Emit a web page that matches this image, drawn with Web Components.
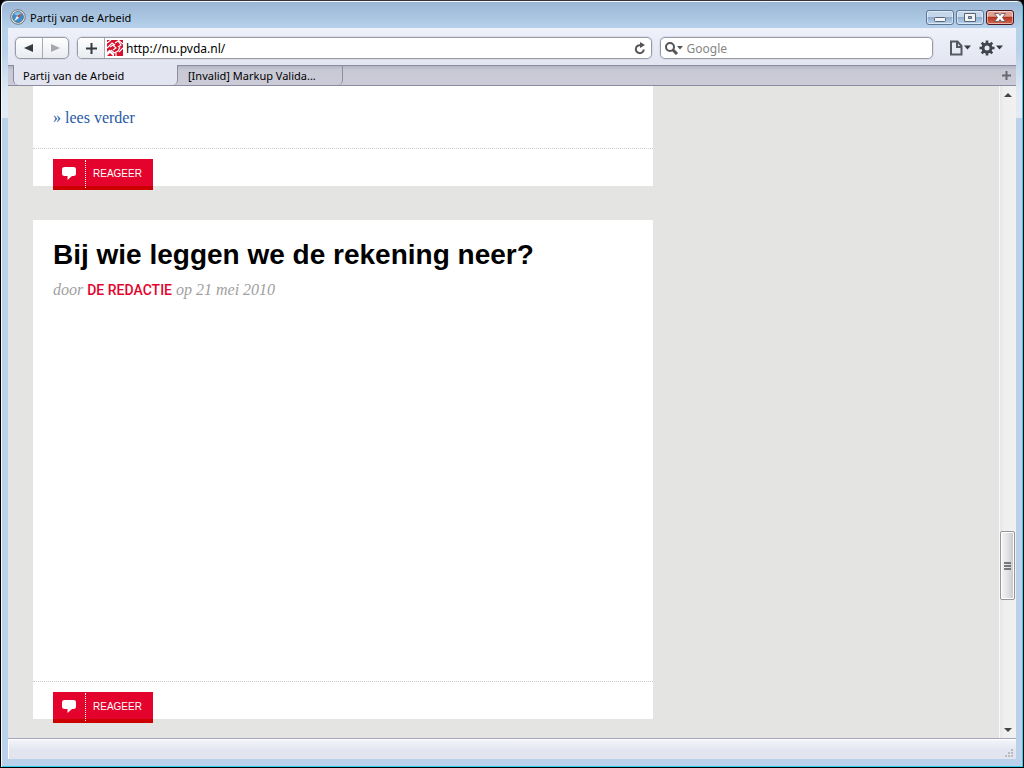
<!DOCTYPE html>
<html lang="nl">
<head>
<meta charset="utf-8">
<title>Partij van de Arbeid</title>
<style>
html, body { margin: 0; height: 100%; background: #000; }
body { font: 11px/16px "Noto Sans", "Open Sans", sans-serif; color: #000; }
</style>
</head>
<body>
<browser-window>
  <title-bar slot="title">Partij van de Arbeid</title-bar>
  <nav-bar slot="chrome"></nav-bar>
  <tab-strip slot="chrome">
    <tab-item active>Partij van de Arbeid</tab-item>
    <tab-item>[Invalid] Markup Valida...</tab-item>
  </tab-strip>
  <web-view slot="view">
    <blog-post>
      <read-more>» lees verder</read-more>
    </blog-post>
    <blog-post>
      <post-heading author="DE REDACTIE" date="21 mei 2010">Bij wie leggen we de rekening neer?</post-heading>
      <media-space></media-space>
    </blog-post>
  </web-view>
  <status-bar slot="status"></status-bar>
</browser-window>

<script>
function define(name, markup, setup) {
  const template = document.createElement('template');
  template.innerHTML = markup;
  customElements.define(name, class extends HTMLElement {
    constructor() {
      super();
      this.attachShadow({ mode: 'open' }).append(template.content.cloneNode(true));
    }
    connectedCallback() { if (setup) setup(this, this.shadowRoot); }
  });
}

define('browser-window', `
<style>
:host { display: flex; flex-direction: column; height: 100vh; box-sizing: border-box;
  border: 1px solid #000; border-top-color: #33333b; border-radius: 7px 7px 0 0; overflow: hidden;
  box-shadow: inset 1px 1px #f3f8fd, inset -1px -1px #2bd0ee;
  padding: 1px;
  background: linear-gradient(#9ab5d4 0, #b6d1ea 27px, #b9d1ea 50px, #dfe9f5 90px, #e2ebf5 117px, #b9d1ea 117px); }
.inner { display: flex; flex-direction: column; flex: 1; min-height: 0; margin: 0 6px 7px; }
.view { flex: 1; min-height: 0; display: flex; }
</style>
<slot name="title"></slot>
<div class="inner">
  <slot name="chrome"></slot>
  <div class="view"><slot name="view"></slot></div>
  <slot name="status"></slot>
</div>`);

define('title-bar', `
<style>
:host { display: flex; align-items: center; height: 26px; padding: 0 8px; }
.logo { width: 16px; height: 16px; margin: 4px 4px 0 0; }
.name { flex: 1; padding-top: 5px; }
.buttons { display: flex; gap: 2px; padding-top: 5px; }
button { width: 28px; height: 15px; padding: 0; box-sizing: border-box; border: 1px solid #5f7595; border-radius: 3px;
  box-shadow: inset 0 0 0 1px #ffffff80; display: flex; align-items: center; justify-content: center;
  background: linear-gradient(#c3d6ea 0 45%, #91aecd 50%, #b8d3ec); }
button.close { border-color: #4a1420; background: linear-gradient(#e0a090 0 40%, #b83521 50%, #d4694f); }
svg { flex: none; }
</style>
<svg class="logo" viewBox="0 0 16 16"><circle cx="8" cy="8" r="7.3" fill="#dfe3e6" stroke="#72787e"/><circle cx="8" cy="8" r="5.4" fill="#3d8ed0" stroke="#4e6579" stroke-width=".8"/><path d="M4 5a5 5 0 0 1 8 0L8 7z" fill="#85c2ea"/><path d="M11.8 4 9 9 7 7z" fill="#c2483b"/><path d="M4.2 12 7 7l2 2z" fill="#f5f5f5"/></svg>
<span class="name"><slot></slot></span>
<div class="buttons">
  <button aria-label="Minimaliseren"><svg width="12" height="11"><rect x=".5" y="5.500" width="11" height="4" rx="1" fill="#f4f4f4" stroke="#56657a"/></svg></button>
  <button aria-label="Maximaliseren"><svg width="12" height="11"><path d="M.5 1.500h11v8h-11zM4.500 4.500v2h3v-2z" fill="#f4f4f4" fill-rule="evenodd" stroke="#56657a"/></svg></button>
  <button class="close" aria-label="Sluiten"><svg width="12" height="11"><path d="M.5 1.500h4L6 3.500l1.500-2h4l-3 4 3 4h-4L6 7.500l-1.500 2h-4l3-4z" fill="#fff" stroke="#574b5c" stroke-width=".8"/></svg></button>
</div>`);

define('nav-bar', `
<style>
:host { display: flex; align-items: center; height: 37px; padding: 3px 12px 0 7px; box-sizing: border-box;
  background: linear-gradient(#eef0fa, #e3e5f1); }
button { border: 0; padding: 0; background: none; display: flex; align-items: center; justify-content: center; }
.group, .field { box-sizing: border-box; height: 22px; border: 1px solid #989ca8; border-radius: 5px; display: flex; overflow: hidden; box-shadow: 0 0 0 1px #d9dce8; }
.group { width: 54px; margin-right: 8px; background: linear-gradient(#fff, #e9ebf0); }
.group button { flex: 1; }
.group button + button { border-left: 1px solid #a6aab5; }
.field { background: #fff; align-items: center; }
.url { flex: 576; margin-right: 8px; }
.add { width: 27px; height: 20px; border-right: 1px solid #a6aab5; background: linear-gradient(#fff, #e9ebf0); }
.icon { margin: 0 3px 0 2px; flex: none; }
.search { flex: 273; }
input { flex: 1; min-width: 0; border: 0; padding: 0; outline: 0; background: none; font: inherit; font-size: 12px; color: #000; height: 18px; }
input::placeholder { color: #858585; opacity: 1; }
.reload { width: 22px; }
.find { width: 26px; }
.menu { width: 24px; height: 20px; }
.page { margin-left: 15px; }
.gear { width: 26px; margin-left: 6px; }
</style>
<div class="group">
  <button aria-label="Vorige"><svg width="12" height="10"><path d="M10 1v8L1 5z" fill="#353b42"/></svg></button>
  <button aria-label="Volgende"><svg width="12" height="10"><path d="M2 1v8l9-4z" fill="#a5a8ae"/></svg></button>
</div>
<div class="field url">
  <button class="add" aria-label="Bladwijzer toevoegen"><svg width="11" height="11"><path d="M5.500 0v11M0 5.500h11" stroke="#333940" stroke-width="2"/></svg></button>
  <svg class="icon" width="16" height="16" viewBox="0 0 16 16"><path fill="#d80f2b" d="M0 0h16v16H0z"/><path d="M0 3 4 0M0 8l5-5 3 2M3 7l3-2 3 3-3 2M8 3l3-2 3 4-3 2M11 0l5 4M4 10l3 3 4-2 2-4M0 13l3-3M9 13v3M12 12l4-4" stroke="#fff" stroke-width="1.200" fill="none"/><path d="M0 12l3-2 4 4v2H0z" fill="#fff"/><path d="M0 16l3-3 3 3z" fill="#d80f2b"/></svg>
  <input aria-label="Adres" value="http://nu.pvda.nl/">
  <button class="reload" aria-label="Vernieuwen"><svg width="12" height="13" viewBox="0 0 12 13"><path d="M9.800 7.500A4 4 0 1 1 6.500 3.200" fill="none" stroke="#555" stroke-width="2"/><path d="M6 0v6l5-3z" fill="#555"/></svg></button>
</div>
<div class="field search">
  <button class="find" aria-label="Zoekopties"><svg width="20" height="14"><circle cx="6" cy="6" r="4" fill="none" stroke="#555" stroke-width="2"/><path d="m9 9 4 4" stroke="#555" stroke-width="3"/><path d="M13 5h6l-3 3.500z" fill="#555"/></svg></button>
  <input type="search" aria-label="Zoeken" placeholder="Google">
</div>
<button class="menu page" aria-label="Pagina"><svg width="23" height="16"><path d="M2 1.500h6.500L12.500 6v8.500H2z M8 2v5h4.500" fill="none" stroke="#555a60" stroke-width="2"/><path d="M15 5.500h7l-3.500 4z" fill="#353b42"/></svg></button>
<button class="menu gear" aria-label="Instellingen"><svg width="26" height="16"><g transform="translate(9 8)" stroke="#40464d"><circle r="4" fill="none" stroke-width="3"/><path d="M0-7.500V-4M0 7.500V4M-7.500 0H-4M7.500 0H4M-5.300-5.300-3-3M5.300 5.300 3 3M-5.300 5.300-3 3M5.300-5.300 3-3" stroke-width="2.600"/></g><path d="M18 5.500h7l-3.500 4z" fill="#353b42"/></svg></button>`);

define('tab-strip', `
<style>
:host { display: flex; height: 21px; box-sizing: border-box; border-top: 1px solid #8b8ca0; border-bottom: 1px solid #8b8ca0;
  background: linear-gradient(#b4b5c4, #c8c9d5 4px, #cbccd8); padding-left: 5px; }
.plus { margin-left: auto; width: 20px; border: 0; padding: 0; background: none; display: flex; align-items: center; justify-content: center; }
</style>
<slot></slot>
<button class="plus" aria-label="Nieuw tabblad"><svg width="9" height="9"><path d="M4.500 0v9M0 4.500h9" stroke="#666a70" stroke-width="2"/></svg></button>`);

define('tab-item', `
<style>
:host { display: block; width: 165px; box-sizing: border-box; border-right: 1px solid #8b8ca0; border-bottom-right-radius: 5px; }
:host([active]) { background: #e3e5f1; border-left: 1px solid #8b8ca0; border-bottom-left-radius: 5px; margin-top: -1px; }
button { display: block; border: 0; padding: 2px 0 0 10px; background: none; font: inherit; color: inherit; text-align: left; width: 100%; white-space: nowrap; }
:host([active]) button { padding: 3px 0 0 9px; }
</style>
<button role="tab"><slot></slot></button>`);

define('web-view', `
<style>
:host { display: flex; flex: 1; min-width: 0; overflow: hidden; background: #e4e4e2; }
main { flex: 1; min-width: 0; overflow: hidden; padding-left: 25px; }
</style>
<main><slot></slot></main>
<scroll-bar></scroll-bar>`);

define('scroll-bar', `
<style>
:host { display: flex; flex-direction: column; width: 16px; border-left: 1px solid #f8f8f8; background: linear-gradient(90deg, #e6e6e6, #efefef 4px, #f1f1f1); }
svg { display: block; flex: none; }
button { border: 0; padding: 0; height: 17px; width: 100%; background: none; display: flex; align-items: center; justify-content: center; }
.before { flex: 429; }
.after { flex: 121; }
.thumb { height: 69px; width: 15px; box-sizing: border-box; border: 1px solid #959595; border-radius: 2px; box-shadow: inset 0 0 0 1px #fff;
  background: linear-gradient(90deg, #f5f5f5, #e3e3e5 50%, #c4c6ca); display: flex; align-items: center; justify-content: center; }
</style>
<button aria-label="Omhoog"><svg width="8" height="4"><path d="M0 4 4 0l4 4z" fill="#444"/></svg></button>
<div class="before"></div>
<div class="thumb"><svg width="7" height="8"><path d="M0 1h7M0 4h7M0 7h7" stroke="#555" stroke-width="1.500"/></svg></div>
<div class="after"></div>
<button aria-label="Omlaag"><svg width="8" height="4"><path d="M0 0h8L4 4z" fill="#444"/></svg></button>`);

define('blog-post', `
<style>
:host { display: block; max-width: 620px; background: #fff; margin-bottom: 34px; }
.body { padding: 0 20px; }
footer { border-top: 1px dotted #ccc; height: 37px; padding: 0 20px; }
react-button { margin-top: 10px; }
</style>
<article>
  <div class="body"><slot></slot></div>
  <footer><react-button></react-button></footer>
</article>`);

define('read-more', `
<style>
:host { display: block; font: 16px/20px "Liberation Serif", serif; padding: 22px 0 20px; }
a { color: #1f5aa8; text-decoration: none; }
</style>
<a href="#"><slot></slot></a>`);

define('post-heading', `
<style>
:host { display: block; padding-top: 19px; }
h2 { margin: 0; font: bold 28px/32px "Liberation Sans", Arial, sans-serif; }
p { margin: 9px 0 0; font: italic 16px/20px "Liberation Serif", serif; color: #a0a0a0; }
a { font: 500 14px/20px Roboto, sans-serif; color: #e4032d; text-decoration: none; }
</style>
<h2><slot></slot></h2>
<p>door <a href="#"></a> op <time></time></p>`, (host, root) => {
  root.querySelector('a').textContent = host.getAttribute('author');
  root.querySelector('time').textContent = host.getAttribute('date');
});

define('media-space', `
<style>
:host { display: block; height: 381px; }
</style>`);

define('react-button', `
<style>
:host { display: block; width: 100px; }
button { display: flex; align-items: stretch; width: 100%; height: 31px; border: 0; padding: 0; color: #fff;
  font: 10px/30px "Liberation Sans", Arial, sans-serif; background: linear-gradient(#e4032d 27px, #cc0000 27px); }
.icon { width: 33px; padding-left: 9px; box-sizing: border-box; display: flex; align-items: center; border-right: 1px dotted #fff; margin: 1px 0 2px; }
.label { padding-left: 7px; }
</style>
<button><span class="icon"><svg width="15" height="14"><path d="M2.500 0h9Q14 0 14 2v5Q14 9 11.500 9H10l-4.500 4V9h-3Q0 9 0 7V2Q0 0 2.500 0z" fill="#fff"/></svg></span><span class="label">REAGEER</span></button>`);

define('status-bar', `
<style>
:host { display: flex; height: 21px; box-sizing: border-box; justify-content: flex-end; align-items: flex-end; border-top: 1px solid #a5a6bd;
  box-shadow: inset 1px 1px #fff; background: linear-gradient(#f4f5fb, #e2e4f0 60%); }
svg { margin: 0 2px 1px 0; }
</style>
<svg width="9" height="9"><path d="M6 0h2v2H6zM3 3h2v2H3zM6 3h2v2H6zM0 6h2v2H0zM3 6h2v2H3zM6 6h2v2H6z" fill="#bbb"/></svg>`);
</script>
</body>
</html>
